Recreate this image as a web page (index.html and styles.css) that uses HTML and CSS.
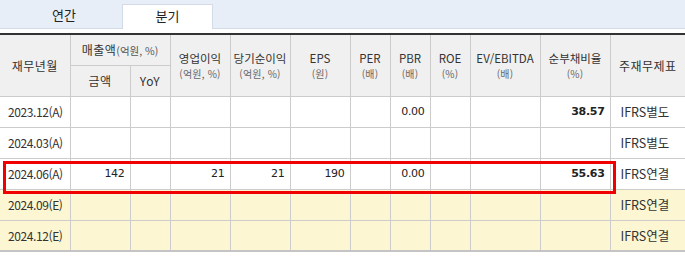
FILE: index.html
```html
<!DOCTYPE html>
<html lang="ko">
<head>
<meta charset="utf-8">
<link rel="stylesheet" href="styles.css">
</head>
<body>
<div class="tabs">
  <div class="tab">연간</div>
  <div class="tab active">분기</div>
</div>
<div class="gap"></div>
<div class="wrap">
<table class="fin">
  <colgroup>
    <col style="width:70px"><col style="width:60px"><col style="width:40px"><col style="width:60px"><col style="width:60px"><col style="width:60px"><col style="width:40px"><col style="width:40px"><col style="width:40px"><col style="width:70px"><col style="width:70px"><col style="width:75px">
  </colgroup>
  <thead>
    <tr>
      <th rowspan="2" class="first">재무년월</th>
      <th colspan="2">매출액<span class="unit-in">(억원, %)</span></th>
      <th rowspan="2"><div class="two"><span class="main">영업이익</span><span class="unit">(억원, %)</span></div></th>
      <th rowspan="2"><div class="two"><span class="main">당기순이익</span><span class="unit">(억원, %)</span></div></th>
      <th rowspan="2"><div class="two"><span class="main">EPS</span><span class="unit">(원)</span></div></th>
      <th rowspan="2"><div class="two"><span class="main">PER</span><span class="unit">(배)</span></div></th>
      <th rowspan="2"><div class="two"><span class="main">PBR</span><span class="unit">(배)</span></div></th>
      <th rowspan="2"><div class="two"><span class="main">ROE</span><span class="unit">(%)</span></div></th>
      <th rowspan="2"><div class="two"><span class="main">EV/EBITDA</span><span class="unit">(배)</span></div></th>
      <th rowspan="2"><div class="two"><span class="main">순부채비율</span><span class="unit">(%)</span></div></th>
      <th rowspan="2" class="last">주재무제표</th>
    </tr>
    <tr>
      <th>금액</th>
      <th>YoY</th>
    </tr>
  </thead>
  <tbody>
    <tr>
      <td class="date first">2023.12(A)</td>
      <td></td><td></td><td></td><td></td><td></td><td></td>
      <td class="num">0.00</td><td></td><td></td>
      <td class="num bold">38.57</td>
      <td class="type last">IFRS별도</td>
    </tr>
    <tr>
      <td class="date first">2024.03(A)</td>
      <td></td><td></td><td></td><td></td><td></td><td></td>
      <td></td><td></td><td></td><td></td>
      <td class="type last">IFRS별도</td>
    </tr>
    <tr>
      <td class="date first">2024.06(A)</td>
      <td class="num">142</td><td></td>
      <td class="num">21</td><td class="num">21</td><td class="num">190</td><td></td>
      <td class="num">0.00</td><td></td><td></td>
      <td class="num bold">55.63</td>
      <td class="type last">IFRS연결</td>
    </tr>
    <tr class="est">
      <td class="date first">2024.09(E)</td>
      <td></td><td></td><td></td><td></td><td></td><td></td>
      <td></td><td></td><td></td><td></td>
      <td class="type last">IFRS연결</td>
    </tr>
    <tr class="est">
      <td class="date first">2024.12(E)</td>
      <td></td><td></td><td></td><td></td><td></td><td></td>
      <td></td><td></td><td></td><td></td>
      <td class="type last">IFRS연결</td>
    </tr>
  </tbody>
</table>
<div class="highlight"></div>
</div>
</body>
</html>
```

FILE: styles.css
```css
* { box-sizing: border-box; }
html, body { margin: 0; padding: 0; background: #ffffff; }
body {
  font-family: "Noto Sans CJK KR", "Noto Sans", sans-serif;
  font-size: 12px;
  color: #333333;
  width: 685px;
  overflow: hidden;
}
.tabs {
  display: flex;
  align-items: flex-end;
  height: 29px;
  background: #e7eef8;
  border-bottom: 1px solid #d3dbe6;
  padding-left: 8px;
  gap: 2px;
}
.tab {
  width: 112px;
  height: 24px;
  line-height: 22px;
  text-align: center;
  font-size: 13px;
  color: #222222;
}
.tab.active {
  width: 91px;
  background: #ffffff;
  border: 1px solid #d3dbe6;
  border-bottom: none;
  height: 25px;
  margin-bottom: -1px;
}
.gap { height: 4px; }
.wrap { position: relative; }
.fin {
  width: 685px;
  table-layout: fixed;
  border-collapse: collapse;
  border-top: 2px solid #333333;
  border-bottom: 2px solid #c4c4c4;
}
.fin th, .fin td {
  border: 1px solid #cccccc;
  height: 31px;
  padding: 0;
  white-space: nowrap;
  overflow: hidden;
}
.fin th.first, .fin td.first { border-left: none; }
.fin th.last, .fin td.last { border-right: none; }
.fin th {
  background: #f0f0f0;
  font-weight: normal;
  font-size: 12px;
  color: #333333;
  text-align: center;
  letter-spacing: 0.5px;
}
.two {
  display: flex;
  flex-direction: column;
  align-items: center;
}
.main { font-size: 11.5px; line-height: normal; letter-spacing: 0; }
.unit { font-size: 10px; line-height: normal; color: #666666; letter-spacing: 0.2px; }
.unit-in { font-size: 10.5px; color: #555555; letter-spacing: 0; }
.fin td { background: #ffffff; }
.fin tr.est td { background: #fcf6d2; }
.date { padding-left: 8px !important; font-size: 12px; letter-spacing: -0.4px; }
.num {
  text-align: right;
  padding-right: 5px !important;
  font-family: "DejaVu Sans", sans-serif;
  font-size: 11px;
  color: #222222;
  letter-spacing: -0.3px;
}
.num.bold { font-weight: bold; }
.type { padding-left: 10px !important; font-size: 12.5px; }
.highlight {
  position: absolute;
  left: 3px;
  top: 128px;
  width: 613px;
  height: 33px;
  border: 3px solid #f00000;
  pointer-events: none;
}
```
